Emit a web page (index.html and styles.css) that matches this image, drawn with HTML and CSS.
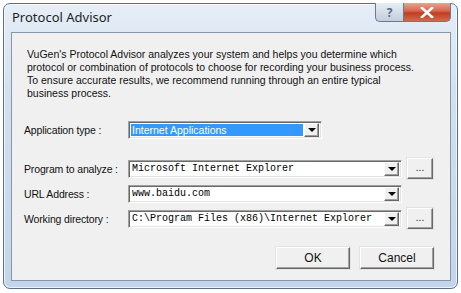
FILE: index.html
```html
<!DOCTYPE html>
<html lang="en">
<head>
    <meta charset="UTF-8">
    <title>Protocol Advisor</title>
    <link rel="stylesheet" href="styles.css">
</head>
<body>
    <div class="window">
        <div class="titlebar">
            <span class="title">Protocol Advisor</span>
            <div class="caption-btns">
                <div class="cap help">?</div>
                <div class="cap close">
                    <svg width="14" height="11" viewBox="0 0 14 11">
                        <path d="M2 1 L12 10 M12 1 L2 10" stroke="#fff" stroke-width="2.6" stroke-linecap="square"/>
                    </svg>
                </div>
            </div>
        </div>

        <div class="client">
            <p class="intro">VuGen's Protocol Advisor analyzes your system and helps you determine which protocol or combination of protocols to choose for recording your business process. To ensure accurate results, we recommend running through an entire typical business process.</p>

            <div class="row app-row">
                <span class="label">Application type :</span>
                <div class="combo select">
                    <span class="value selected">Internet Applications</span>
                    <span class="drop"><i></i></span>
                </div>
            </div>

            <div class="fields">
                <div class="row">
                    <span class="label">Program to analyze :</span>
                    <div class="combo wide">
                        <span class="value mono">Microsoft Internet Explorer</span>
                        <span class="drop"><i></i></span>
                    </div>
                    <button class="btn browse">...</button>
                </div>
                <div class="row">
                    <span class="label">URL Address :</span>
                    <div class="combo wide">
                        <span class="value mono">www.baidu.com</span>
                        <span class="drop"><i></i></span>
                    </div>
                </div>
                <div class="row">
                    <span class="label">Working directory :</span>
                    <div class="combo wide">
                        <span class="value mono">C:\Program Files (x86)\Internet Explorer</span>
                        <span class="drop"><i></i></span>
                    </div>
                    <button class="btn browse">...</button>
                </div>
            </div>

            <div class="actions">
                <button class="btn action">OK</button>
                <button class="btn action">Cancel</button>
            </div>
        </div>
    </div>
</body>
</html>
```

FILE: styles.css
```css
* {
    margin: 0;
    padding: 0;
    box-sizing: border-box;
}

body {
    font-family: 'Liberation Sans', Arial, sans-serif;
    font-size: 11px;
    color: #000;
    background: #fff;
    width: 461px;
    height: 293px;
    overflow: hidden;
}

.window {
    margin: 3px 0 0 3px;
    width: 455px;
    height: 286px;
    border: 1px solid #5d6f86;
    border-radius: 7px;
    background: linear-gradient(180deg, #e6eef7 0%, #d3e1ef 30%, #c2d5ea 100%);
    box-shadow: inset 0 0 0 1px rgba(255, 255, 255, 0.7);
    display: flex;
    flex-direction: column;
}

.titlebar {
    height: 28px;
    display: flex;
    justify-content: space-between;
    align-items: flex-start;
}

.title {
    font-family: 'Noto Sans', 'Open Sans', sans-serif;
    font-size: 13px;
    color: #1e1e1e;
    margin: 4px 0 0 8px;
}

.caption-btns {
    display: flex;
    margin: -1px 6px 0 0;
}

.cap {
    height: 19px;
    display: flex;
    align-items: center;
    justify-content: center;
    border: 1px solid #6a7a8e;
    border-top: none;
}

.help {
    width: 28px;
    border-right: none;
    border-radius: 0 0 0 5px;
    background: linear-gradient(180deg, #e9eef4 0%, #d4dde8 50%, #c3cfdd 100%);
    color: #5a6a80;
    font-family: 'Noto Sans', sans-serif;
    font-weight: bold;
    font-size: 12px;
}

.close {
    width: 48px;
    border-radius: 0 0 5px 0;
    background: linear-gradient(180deg, #e8a593 0%, #d8644b 45%, #c13d22 55%, #d26a4e 100%);
}

.client {
    flex: 1;
    margin: 0 6px 7px 7px;
    border: 1px solid #8796a9;
    background: #f0f0f0;
    padding: 15px 16px 0 12px;
}

.intro {
    padding-left: 3px;
    width: 393px;
    line-height: 13px;
    font-size: 10.5px;
    color: #111;
}

.row {
    display: flex;
    align-items: center;
    height: 21px;
}

.app-row {
    margin-top: 21px;
    height: 18px;
}

.fields {
    margin-top: 19px;
    display: flex;
    flex-direction: column;
    gap: 4px;
}

.label {
    width: 104px;
    font-size: 10.5px;
    letter-spacing: -0.15px;
    color: #111;
    white-space: nowrap;
}

.combo {
    height: 18px;
    display: flex;
    align-items: stretch;
    background: #fff;
    border: 1px solid;
    border-color: #a0a0a0 #fff #fff #a0a0a0;
    box-shadow: inset 1px 1px 0 #696969, inset -1px -1px 0 #e3e3e3;
    padding: 2px;
}

.select {
    width: 194px;
}

.wide {
    width: 274px;
}

.value {
    flex: 1;
    display: flex;
    align-items: center;
    padding-left: 1px;
    white-space: nowrap;
    overflow: hidden;
}

.selected {
    background: #3399ff;
    color: #fff;
    margin-right: 1px;
    font-size: 10.5px;
}

.mono {
    font-family: 'Liberation Mono', 'Courier New', monospace;
    font-size: 10px;
}

.drop {
    width: 15px;
    background: #f0f0f0;
    border: 1px solid;
    border-color: #fff #696969 #696969 #fff;
    box-shadow: inset -1px -1px 0 #a0a0a0;
    display: flex;
    align-items: center;
    justify-content: center;
    margin-top: -1px;
    margin-bottom: -1px;
}

.drop i {
    width: 0;
    height: 0;
    border-left: 4px solid transparent;
    border-right: 4px solid transparent;
    border-top: 4px solid #000;
}

.btn {
    font-family: 'Liberation Sans', Arial, sans-serif;
    font-size: 11px;
    color: #111;
    background: #f0f0f0;
    border: 1px solid;
    border-color: #fff #696969 #696969 #fff;
    box-shadow: inset -1px -1px 0 #a0a0a0;
    outline: 1px solid #e3e3e3;
}

.browse {
    width: 26px;
    height: 21px;
    margin-left: 5px;
    font-size: 10px;
    padding-bottom: 3px;
}

.actions {
    display: flex;
    justify-content: flex-end;
    gap: 10px;
    margin-top: 18px;
}

.action {
    width: 74px;
    height: 22px;
    font-size: 12px;
}
```
